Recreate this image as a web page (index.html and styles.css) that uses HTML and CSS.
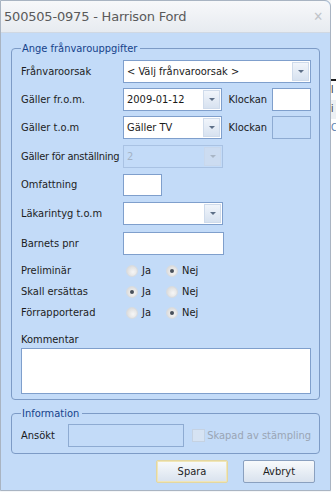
FILE: index.html
```html
<!DOCTYPE html>
<html>
<head>
<meta charset="utf-8">
<link rel="stylesheet" href="styles.css">
</head>
<body>
<div class="desk">
  <div class="window">
    <div class="titlebar">
      <span class="title">500505-0975 - Harrison Ford</span>
      <span class="close">✕</span>
    </div>
    <div class="content">
      <fieldset class="group main">
        <legend>Ange frånvarouppgifter</legend>
        <div class="row r1">
          <span class="lbl">Frånvaroorsak</span>
          <div class="combo wide"><span class="val">&lt; Välj frånvaroorsak &gt;</span><span class="btn"><i></i></span></div>
        </div>
        <div class="row">
          <span class="lbl">Gäller fr.o.m.</span>
          <div class="combo mid"><span class="val">2009-01-12</span><span class="btn"><i></i></span></div>
          <span class="klk">Klockan</span>
          <div class="box time"></div>
        </div>
        <div class="row">
          <span class="lbl">Gäller t.o.m</span>
          <div class="combo mid"><span class="val">Gäller TV</span><span class="btn"><i></i></span></div>
          <span class="klk">Klockan</span>
          <div class="box time disabled"></div>
        </div>
        <div class="row r4">
          <span class="lbl tight">Gäller för anställning</span>
          <div class="combo mid disabled"><span class="val">2</span><span class="btn"><i></i></span></div>
        </div>
        <div class="row">
          <span class="lbl">Omfattning</span>
          <div class="box small"></div>
        </div>
        <div class="row r6">
          <span class="lbl">Läkarintyg t.o.m</span>
          <div class="combo mid"><span class="val"></span><span class="btn"><i></i></span></div>
        </div>
        <div class="row r7">
          <span class="lbl">Barnets pnr</span>
          <div class="box pnr"></div>
        </div>
        <div class="rrow first">
          <span class="lbl">Preliminär</span>
          <span class="opt"><span class="radio"></span>Ja</span>
          <span class="opt"><span class="radio on"></span>Nej</span>
        </div>
        <div class="rrow">
          <span class="lbl">Skall ersättas</span>
          <span class="opt"><span class="radio on"></span>Ja</span>
          <span class="opt"><span class="radio"></span>Nej</span>
        </div>
        <div class="rrow">
          <span class="lbl">Förrapporterad</span>
          <span class="opt"><span class="radio"></span>Ja</span>
          <span class="opt"><span class="radio on"></span>Nej</span>
        </div>
        <div class="komm">Kommentar</div>
        <div class="textarea"></div>
      </fieldset>
      <fieldset class="group info">
        <legend>Information</legend>
        <div class="inforow">
          <span class="lbl2">Ansökt</span>
          <div class="box ans disabled"></div>
          <span class="chk"><span class="cbox"></span>Skapad av stämpling</span>
        </div>
      </fieldset>
      <div class="buttons">
        <span class="button default">Spara</span>
        <span class="button">Avbryt</span>
      </div>
    </div>
  </div>
  <div class="behind">
    <div class="b1"></div>
    <div class="b2">l</div>
    <div class="b3">i</div>
    <div class="b4">C</div>
  </div>
</div>
</body>
</html>
```
FILE: styles.css
```css
* { box-sizing: border-box; }
body {
  margin: 0;
  background: #ffffff;
  font-family: "DejaVu Sans Condensed", "DejaVu Sans", sans-serif;
  font-size: 11px;
  color: #1a1a1a;
}
.desk {
  display: flex;
  width: 336px;
  height: 492px;
  overflow: hidden;
  background: #f4f6f8;
}
.window {
  width: 331px;
  height: 491px;
  flex: none;
  display: flex;
  flex-direction: column;
  border: 1px solid #a9b4c2;
  border-radius: 0 6px 0 0;
  background: #c3dbf8;
}
.titlebar {
  height: 32px;
  flex: none;
  display: flex;
  align-items: center;
  justify-content: space-between;
  padding: 0 6px 0 3px;
  background: linear-gradient(#f7f8fa, #e7ebf0);
  border-bottom: 1px solid #d0d8e2;
  border-radius: 0 6px 0 0;
}
.title {
  font-family: "DejaVu Sans", sans-serif;
  font-size: 13px;
  color: #5a5a5a;
  letter-spacing: -0.2px;
}
.close {
  color: #c0c4c9;
  font-size: 13px;
  margin-right: 1px;
}
.content {
  flex: 1;
  display: flex;
  flex-direction: column;
  padding: 9px 10px 0 10px;
}
.group {
  margin: 0;
  border: 1px solid #7d9bc6;
  border-radius: 4px;
  padding: 0 8px 5px 9px;
  min-width: 0;
}
.group legend {
  color: #15428b;
  padding: 0 3px 0 1px;
  margin-left: 0;
  font-size: 11px;
  line-height: 13px;
}
.row {
  display: flex;
  align-items: center;
  height: 23px;
  margin-top: 5px;
}
.row.r1 { margin-top: 5px; }
.row.r4 { margin-top: 6px; }
.row.r6 { margin-top: 6px; }
.row.r7 { margin-top: 7px; }
.lbl {
  width: 102px;
  flex: none;
  color: #1d1d1d;
  white-space: nowrap;
}
.lbl.tight { letter-spacing: -0.25px; }
.combo {
  height: 23px;
  display: flex;
  background: #ffffff;
  border: 1px solid #7f9fcc;
}
.combo .val {
  flex: 1;
  padding: 0 3px;
  line-height: 21px;
  white-space: nowrap;
  overflow: hidden;
}
.combo .btn {
  width: 17px;
  flex: none;
  margin: 1px;
  border: 1px solid #cfdbeb;
  background: linear-gradient(#f1f5fb, #d7e2f0);
  display: flex;
  align-items: center;
  justify-content: center;
}
.combo .btn i {
  width: 0;
  height: 0;
  border-left: 3px solid transparent;
  border-right: 3px solid transparent;
  border-top: 3px solid #5d6f87;
}
.combo.wide { width: 189px; }
.combo.mid { width: 100px; }
.combo.disabled {
  background: #c3dbf8;
  border-color: #a9c2e3;
  color: #a4b3c6;
}
.combo.disabled .btn {
  border-color: #c9d8ec;
  background: #ccdcf1;
}
.combo.disabled .btn i { border-top-color: #a9b6c6; }
.klk {
  margin-left: 6px;
  width: 44px;
  white-space: nowrap;
}
.box {
  height: 23px;
  background: #ffffff;
  border: 1px solid #7f9fcc;
}
.box.disabled {
  background: #c3dbf8;
  border-color: #8eabd2;
}
.time { width: 39px; }
.small { width: 39px; height: 22px; }
.pnr { width: 101px; height: 23px; }
.rrow {
  display: flex;
  align-items: center;
  height: 21px;
}
.rrow.first { margin-top: 5px; }
.opt {
  display: flex;
  align-items: center;
  width: 40px;
}
.radio {
  width: 12px;
  height: 12px;
  border-radius: 50%;
  margin: 0 4px 0 3px;
  background: radial-gradient(circle at 60% 60%, #f6f6f6, #d4d4d4);
  border: 1px solid #d7dbe0;
  display: flex;
  align-items: center;
  justify-content: center;
}
.radio.on::after {
  content: "";
  width: 4px;
  height: 4px;
  border-radius: 50%;
  background: #48505a;
}
.komm {
  margin-top: 10px;
  line-height: 13px;
}
.textarea {
  margin-top: 2px;
  width: 290px;
  height: 46px;
  background: #ffffff;
  border: 1px solid #7f9fcc;
}
.info {
  margin-top: 7px;
  padding-bottom: 6px;
}
.inforow {
  display: flex;
  align-items: center;
  margin-top: 4px;
}
.lbl2 { width: 47px; flex: none; }
.ans { width: 121px; }
.chk {
  display: flex;
  align-items: center;
  margin-left: 8px;
  color: #9aa5b4;
  white-space: nowrap;
}
.cbox {
  width: 13px;
  height: 13px;
  border: 1px solid #c5d2e2;
  background: #d6e3f3;
  margin-right: 2px;
}
.buttons {
  display: flex;
  justify-content: flex-end;
  gap: 15px;
  margin-top: 6px;
  padding-right: 5px;
}
.button {
  width: 72px;
  height: 23px;
  display: flex;
  align-items: center;
  justify-content: center;
  border: 1px solid #8aa0bf;
  border-radius: 2px;
  background: linear-gradient(#f8fafc 0%, #e8eef5 50%, #d9e2ee 100%);
  color: #1d1d1d;
}
.button.default {
  border-color: #e4d7a0;
  box-shadow: inset 0 0 0 1px #f0e6b8;
}
.behind {
  flex: 1;
  position: relative;
  background: #ffffff;
  overflow: hidden;
}
.b1 { position: absolute; top: 60px; left: 0; right: 0; height: 20px; border-bottom: 1px solid #d0d6de; }
.b2 { position: absolute; top: 79px; left: 0; right: 0; height: 20px; border-top: 2px solid #1e1e1e; font-size: 10px; padding-top: 3px; }
.b3 { position: absolute; top: 100px; left: 0; right: 0; height: 19px; background: #eef1f4; font-size: 10px; padding-top: 3px; color: #333; }
.b4 { position: absolute; top: 120px; left: 0; right: 0; height: 18px; font-size: 10px; color: #5a7fb0; padding-top: 2px; }
```
